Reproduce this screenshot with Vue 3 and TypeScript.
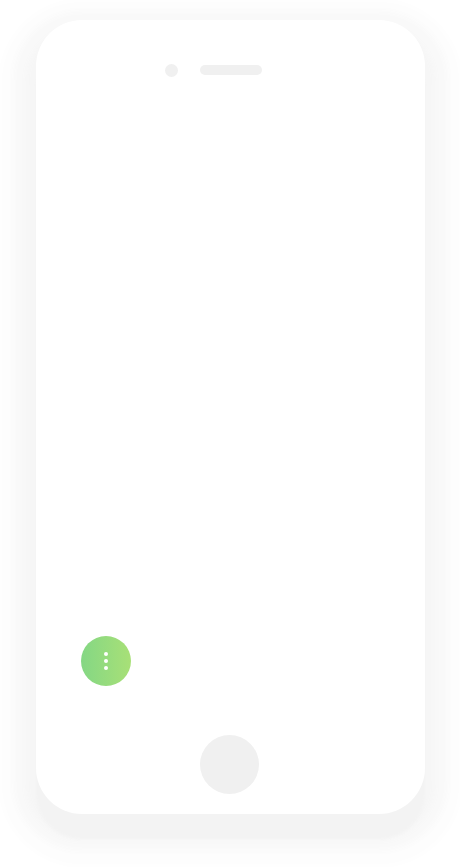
<script setup lang="ts">
const dots: number[] = [1, 2, 3]
</script>

<template>
  <div class="page">
    <div class="phone">
      <div class="top">
        <span class="camera"></span>
        <span class="speaker"></span>
      </div>
      <div class="screen">
        <button class="fab" type="button" aria-label="Menu">
          <span v-for="d in dots" :key="d" class="dot"></span>
        </button>
      </div>
      <div class="bottom">
        <span class="home"></span>
      </div>
    </div>
  </div>
</template>

<style>
html, body { margin: 0; background: #fff; overflow: hidden; }
</style>

<style scoped>
.page {
  width: 460px;
  height: 867px;
  box-sizing: border-box;
  padding: 20px 35px 53px 36px;
  background: #fff;
  overflow: hidden;
}
.phone {
  position: relative;
  height: 794px;
  background: #fff;
  border-radius: 46px;
  display: flex;
  flex-direction: column;
  box-shadow:
    0 25px 3px 0 #f3f3f3,
    0 16px 6px 10px #f6f6f6,
    0 14px 6px 23px #f9f9f9,
    0 16px 8px 36px #fdfdfd;
}
.top {
  height: 100px;
  box-sizing: border-box;
  padding: 44px 0 0 129px;
  display: flex;
  align-items: flex-start;
  gap: 22px;
}
.camera {
  width: 13px;
  height: 13px;
  border-radius: 50%;
  background: #f0f0f0;
}
.speaker {
  width: 62px;
  height: 10px;
  margin-top: 1px;
  border-radius: 5px;
  background: #f0f0f0;
}
.screen {
  flex: 1;
  position: relative;
}
.fab {
  position: absolute;
  left: 45px;
  top: 516px;
  width: 50px;
  height: 50px;
  padding: 0;
  border: 0;
  border-radius: 50%;
  background: linear-gradient(90deg, #84d784, #a8e077);
  display: flex;
  flex-direction: column;
  align-items: center;
  justify-content: center;
  gap: 3px;
}
.dot {
  width: 4px;
  height: 4px;
  border-radius: 50%;
  background: #fff;
}
.bottom {
  height: 79px;
  display: flex;
  justify-content: center;
  padding-right: 2px;
}
.home {
  width: 59px;
  height: 59px;
  border-radius: 50%;
  background: #f0f0f0;
}
</style>
